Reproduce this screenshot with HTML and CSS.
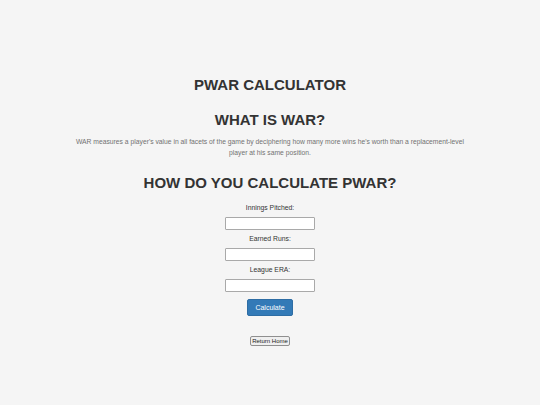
FILE: index.html
```html
<!DOCTYPE html>
<html>
<head>
<meta charset="utf-8">
<link rel="stylesheet" href="styles.css">
</head>
<body>
<main class="page">
  <h1 class="title">PWAR CALCULATOR</h1>
  <h2 class="title second">WHAT IS WAR?</h2>
  <p class="desc">WAR measures a player's value in all facets of the game by deciphering how many more wins he's worth than a replacement-level player at his same position.</p>
  <h2 class="title third">HOW DO YOU CALCULATE PWAR?</h2>
  <form class="calc">
    <label class="field-label">Innings Pitched:</label>
    <input class="field" type="text">
    <label class="field-label">Earned Runs:</label>
    <input class="field" type="text">
    <label class="field-label">League ERA:</label>
    <input class="field" type="text">
    <button type="button" class="btn-calc">Calculate</button>
  </form>
  <button type="button" class="btn-home">Return Home</button>
</main>
</body>
</html>
```
FILE: styles.css
```css
html, body {
  margin: 0;
  padding: 0;
  background: #f5f5f5;
}
body {
  font-family: "Liberation Sans", Arial, sans-serif;
  color: #333;
}
.page {
  display: flex;
  flex-direction: column;
  align-items: center;
  text-align: center;
  padding-top: 76px;
}
.title {
  margin: 0;
  font-size: 15px;
  font-weight: bold;
  line-height: 17px;
  color: #333;
}
.second {
  margin-top: 18px;
}
.desc {
  margin: 8px 0 0;
  width: 400px;
  font-size: 6.75px;
  line-height: 11px;
  color: #727272;
}
.third {
  margin-top: 16px;
}
.calc {
  display: flex;
  flex-direction: column;
  align-items: center;
  margin-top: 12px;
}
.field-label {
  font-size: 6.8px;
  line-height: 10px;
  color: #333;
}
.field {
  box-sizing: border-box;
  width: 90px;
  height: 13px;
  margin: 4px 0 4px;
  border: 1px solid #a9a9a9;
  border-radius: 1px;
  background: #fff;
  padding: 0;
}
.btn-calc {
  margin-top: 3px;
  width: 46px;
  height: 17px;
  border: 1px solid #2e6da4;
  border-radius: 2px;
  background: #337ab7;
  color: #fff;
  font-family: "Liberation Sans", Arial, sans-serif;
  font-size: 7px;
  padding: 0;
}
.btn-home {
  margin-top: 20px;
  width: 40px;
  height: 10px;
  border: 1px solid #8f8f8f;
  border-radius: 2px;
  background: #efefef;
  color: #222;
  font-family: "Liberation Sans", Arial, sans-serif;
  font-size: 6px;
  line-height: 8px;
  padding: 0;
}
```
